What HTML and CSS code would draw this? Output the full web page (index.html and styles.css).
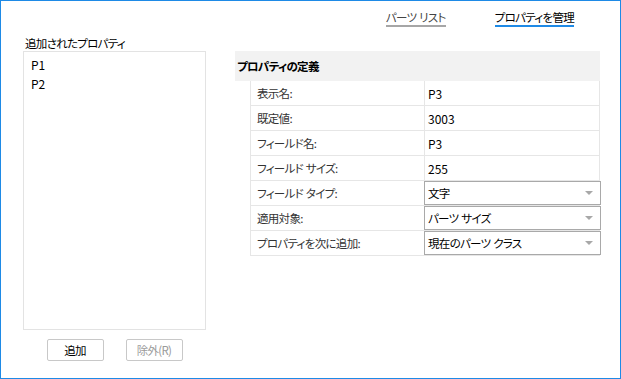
FILE: index.html
```html
<!DOCTYPE html>
<html lang="ja">
<head>
<meta charset="utf-8">
<link rel="stylesheet" href="styles.css">
</head>
<body>
<div class="window">
  <div class="tabs">
    <div class="tab">パーツ リスト</div>
    <div class="tab active">プロパティを管理</div>
  </div>
  <div class="content">
    <div class="left">
      <div class="list-label">追加されたプロパティ</div>
      <div class="list">
        <div class="item">P1</div>
        <div class="item">P2</div>
      </div>
      <div class="buttons">
        <div class="btn">追加</div>
        <div class="btn disabled">除外(R)</div>
      </div>
    </div>
    <div class="right">
      <div class="section-head">プロパティの定義</div>
      <div class="table">
        <div class="row"><div class="k">表示名:</div><div class="v">P3</div></div>
        <div class="row"><div class="k">既定値:</div><div class="v">3003</div></div>
        <div class="row"><div class="k">フィールド名:</div><div class="v">P3</div></div>
        <div class="row"><div class="k">フィールド サイズ:</div><div class="v">255</div></div>
        <div class="row"><div class="k">フィールド タイプ:</div><div class="v sel"><div class="select"><span>文字</span><i class="arrow"></i></div></div></div>
        <div class="row"><div class="k">適用対象:</div><div class="v sel"><div class="select"><span>パーツ サイズ</span><i class="arrow"></i></div></div></div>
        <div class="row"><div class="k">プロパティを次に追加:</div><div class="v sel"><div class="select"><span>現在のパーツ クラス</span><i class="arrow"></i></div></div></div>
      </div>
    </div>
  </div>
</div>
</body>
</html>
```

FILE: styles.css
```css
html, body {
  margin: 0;
  padding: 0;
  background: #ffffff;
}
body {
  font-family: "Noto Sans CJK JP", "Noto Sans", sans-serif;
  font-size: 12px;
  font-feature-settings: "palt";
  color: #000;
}
.window {
  width: 621px;
  height: 379px;
  box-sizing: border-box;
  border: 1px solid #1e8ae6;
  background: #fff;
}
.tab, .list-label, .btn, .section-head, .k, .select span {
  font-size: 11.5px;
  letter-spacing: -0.7px;
  word-spacing: 1px;
}
.tabs {
  display: flex;
  justify-content: flex-end;
  gap: 49px;
  padding: 8px 46px 0 0;
  height: 18px;
}
.tab {
  line-height: 16px;
  color: #444;
  border-bottom: 2px solid #a6a6a6;
  height: 16px;
}
.tab.active {
  color: #000;
  border-bottom-color: #1e8ae6;
}
.content {
  display: flex;
  margin-top: 8px;
}
.left {
  margin-left: 22px;
  width: 183px;
  display: flex;
  flex-direction: column;
}
.list-label {
  padding-left: 2px;
  line-height: 16px;
  height: 16px;
  color: #000;
}
.list {
  height: 279px;
  box-sizing: border-box;
  border: 1px solid #e3e3e3;
  padding: 3px 0 0 7px;
}
.item {
  line-height: 19px;
  height: 19px;
  color: #000;
}
.buttons {
  display: flex;
  justify-content: center;
  gap: 22px;
  margin-top: 9px;
}
.btn {
  width: 57px;
  height: 22px;
  box-sizing: border-box;
  border: 1px solid #c8c8c8;
  border-radius: 2px;
  display: flex;
  align-items: center;
  justify-content: center;
  color: #000;
}
.btn.disabled {
  color: #9a9a9a;
}
.right {
  margin-left: 29px;
  width: 366px;
  padding-top: 16px;
}
.section-head {
  height: 30px;
  width: 365px;
  background: #f2f2f2;
  box-sizing: border-box;
  padding-left: 2px;
  display: flex;
  align-items: center;
  font-weight: bold;
  color: #000;
}
.table {
  margin-left: 15px;
  width: 350px;
  box-sizing: border-box;
  border-left: 1px solid #e6e6e6;
  border-right: 1px solid #e6e6e6;
}
.row {
  display: grid;
  grid-template-columns: 174px 1fr;
  height: 25px;
  box-sizing: border-box;
  border-bottom: 1px solid #e6e6e6;
}
.k {
  padding-left: 6px;
  display: flex;
  align-items: center;
  color: #333;
  border-right: 1px solid #e6e6e6;
}
.v {
  padding-left: 3px;
  display: flex;
  align-items: center;
  color: #000;
}
.v.sel {
  padding-left: 0;
  align-items: stretch;
}
.select {
  flex: 1;
  margin: 0 -2px 0 -1px;
  box-sizing: border-box;
  border: 1px solid #a9a9a9;
  display: flex;
  align-items: center;
  justify-content: space-between;
  padding: 0 7px 0 3px;
  background: #fff;
  color: #000;
}
.arrow {
  width: 0;
  height: 0;
  border-left: 4px solid transparent;
  border-right: 4px solid transparent;
  border-top: 4px solid #a8a8a8;
}
```
